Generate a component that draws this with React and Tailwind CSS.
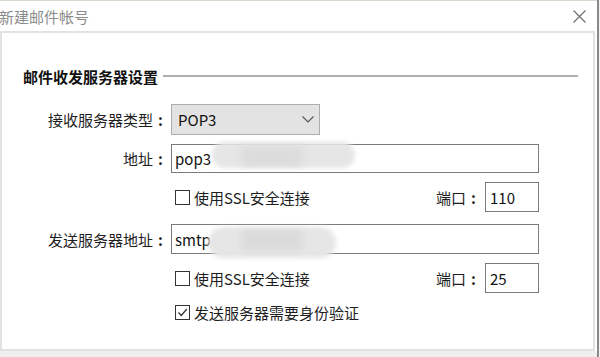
import React from "react";

const font = { fontFamily: '"Noto Sans CJK SC", "Noto Sans", sans-serif' };

function Colon() {
  return <span className="inline-block w-[15px] text-center font-bold">:</span>;
}

function Checkbox({ checked }) {
  return (
    <div className="w-[15px] h-[15px] border border-[#333] bg-white flex items-center justify-center shrink-0">
      {checked && (
        <svg width="13" height="13" viewBox="0 0 13 13">
          <path d="M2.5 6.5 L5.3 9.5 L10.8 3" fill="none" stroke="#333" strokeWidth="1.3" />
        </svg>
      )}
    </div>
  );
}

function Label({ children }) {
  return (
    <div className="w-[166px] text-right shrink-0 text-[15px] text-[#1e1e1e] leading-none">
      {children}
      <Colon />
    </div>
  );
}

function CheckRow({ text, port, className }) {
  return (
    <div className={"flex items-center h-[30px] " + className}>
      <div className="w-[166px] shrink-0" />
      <div className="ml-[3px] w-[368px] flex items-center">
        <div className="flex items-center flex-1 pl-[4px] gap-[4px]">
          <Checkbox />
          <span className="text-[15px] text-[#1e1e1e] leading-none">{text}</span>
        </div>
        <span className="text-[15px] text-[#1e1e1e] leading-none w-[49px]">
          端口
          <Colon />
        </span>
        <div className="w-[54px] h-[30px] border border-[#7a7a7a] bg-white flex items-center pl-[4px] text-[15px] text-[#111] leading-none">
          {port}
        </div>
      </div>
    </div>
  );
}

export default function App() {
  return (
    <div className="w-[600px] h-[357px] bg-white flex overflow-hidden" style={font}>
      <div className="w-[597px] h-full flex flex-col border-t border-[#d8d8cc]">
        <div className="h-[30px] flex items-center justify-between shrink-0">
          <span className="text-[15px] text-[#8c8c8c] leading-none -ml-[1px]">新建邮件帐号</span>
          <svg width="13" height="13" viewBox="0 0 13 13" className="mr-[11px]">
            <path d="M0.5 0.5 L12.5 12.5 M12.5 0.5 L0.5 12.5" stroke="#707070" strokeWidth="1.2" fill="none" />
          </svg>
        </div>
        <div className="h-[320px] mr-[2px] border-2 border-[#e2e2e2] bg-white flex flex-col shrink-0">
          <div className="mt-[33px] h-[20px] flex items-center">
            <span className="pl-[21px] text-[15px] font-bold text-[#111] leading-none">邮件收发服务器设置</span>
            <div className="flex-1 h-[2px] bg-[#b0b0b0] ml-[5px] mr-[15px]" />
          </div>

          <div className="mt-[18px] flex items-center h-[31px]">
            <Label>接收服务器类型</Label>
            <div className="ml-[3px] w-[149px] h-[31px] border border-[#adadad] bg-[#e3e3e3] flex items-center justify-between pl-[6px] pr-[5px]">
              <span className="text-[15px] text-[#111] leading-none">POP3</span>
              <svg width="12" height="7" viewBox="0 0 12 7">
                <path d="M0.5 0.5 L6 6 L11.5 0.5" stroke="#555" strokeWidth="1.1" fill="none" />
              </svg>
            </div>
          </div>

          <div className="mt-[9px] flex items-center h-[29px]">
            <Label>地址</Label>
            <div className="relative ml-[3px] w-[368px] h-[29px] border border-[#7a7a7a] bg-white flex items-center pl-[3px] text-[15px] text-[#111] leading-none">
              pop3
              <div className="absolute left-[40px] -top-[3px] w-[143px] h-[26px] rounded-full bg-[#e6e6e6] blur-[2px]" />
              <div className="absolute left-[70px] top-[1px] w-[60px] h-[20px] bg-[#dcdcdc] blur-[3px]" />
            </div>
          </div>

          <CheckRow text="使用SSL安全连接" port="110" className="mt-[9px]" />

          <div className="mt-[12px] flex items-center h-[30px]">
            <Label>发送服务器地址</Label>
            <div className="relative ml-[3px] w-[368px] h-[30px] border border-[#7a7a7a] bg-white flex items-center pl-[3px] text-[15px] text-[#111] leading-none">
              smtp
              <div className="absolute left-[36px] top-[2px] w-[128px] h-[31px] rounded-full bg-[#e6e6e6] blur-[2px]" />
              <div className="absolute left-[70px] top-[5px] w-[60px] h-[20px] bg-[#dadada] blur-[3px]" />
            </div>
          </div>

          <CheckRow text="使用SSL安全连接" port="25" className="mt-[9px]" />

          <div className="mt-[9px] flex items-center h-[20px]">
            <div className="w-[166px] shrink-0" />
            <div className="ml-[3px] pl-[4px] flex items-center gap-[4px]">
              <Checkbox checked />
              <span className="text-[15px] text-[#1e1e1e] leading-none">发送服务器需要身份验证</span>
            </div>
          </div>
        </div>
        <div className="flex-1 bg-[#efefef]" />
      </div>
      <div className="w-[2px] h-full bg-[#8a8a8a]" />
      <div className="w-[1px] h-full bg-[#f4f4f4]" />
    </div>
  );
}
